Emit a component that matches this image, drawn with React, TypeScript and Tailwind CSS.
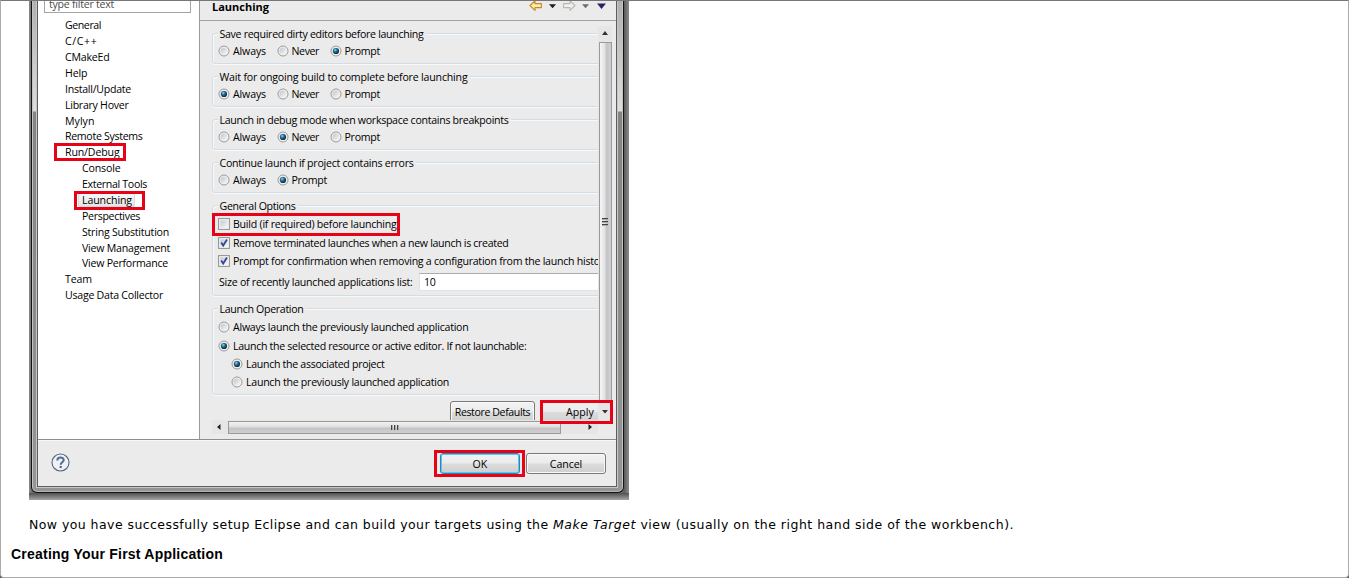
import { useLayoutEffect, useRef, useState, type ReactNode } from "react";

/** A label whose tracking is adjusted so that it spans the given width. */
function Label({ text, w, className = "" }: { text: string; w: number; className?: string }) {
  const ref = useRef<HTMLSpanElement>(null);
  const [spacing, setSpacing] = useState(0);
  useLayoutEffect(() => {
    if (ref.current) {
      const natural = ref.current.getBoundingClientRect().width;
      setSpacing((w - natural) / text.length);
    }
  }, [text, w]);
  return (
    <span ref={ref} className={`inline-block whitespace-pre ${className}`} style={{ letterSpacing: spacing }}>
      {text}
    </span>
  );
}

type TreeItem = { text: string; w: number; child?: boolean; marked?: string; selected?: boolean };

const tree: TreeItem[] = [
  { text: "General", w: 36 },
  { text: "C/C++", w: 32.5 },
  { text: "CMakeEd", w: 44.5 },
  { text: "Help", w: 22.5 },
  { text: "Install/Update", w: 66 },
  { text: "Library Hover", w: 63.5 },
  { text: "Mylyn", w: 29.5 },
  { text: "Remote Systems", w: 77.5 },
  { text: "Run/Debug", w: 54.5, marked: "left-[-11px] top-[-1px] w-[72px] h-[18px]" },
  { text: "Console", w: 38.5, child: true },
  { text: "External Tools", w: 65, child: true },
  { text: "Launching", w: 50, child: true, selected: true, marked: "left-[-8px] top-[-1px] w-[71px] h-[19px]" },
  { text: "Perspectives", w: 58, child: true },
  { text: "String Substitution", w: 87, child: true },
  { text: "View Management", w: 88, child: true },
  { text: "View Performance", w: 86, child: true },
  { text: "Team", w: 27 },
  { text: "Usage Data Collector", w: 98 },
];

function Mark({ className }: { className: string }) {
  return <span className={`pointer-events-none absolute z-10 border-[3px] border-[#e60318] ${className}`} />;
}

function Radio({ on }: { on?: boolean }) {
  return (
    <svg className="h-[12px] w-[12px] shrink-0" viewBox="0 0 12 12">
      <defs>
        <linearGradient id="radioFace" x1="0" y1="0" x2="1" y2="1">
          <stop offset="0" stopColor="#bfc3c9" />
          <stop offset="1" stopColor="#fbfbfb" />
        </linearGradient>
        <radialGradient id="radioDot" cx="0.38" cy="0.35" r="0.65">
          <stop offset="0" stopColor="#8fdcf5" />
          <stop offset="0.45" stopColor="#23698f" />
          <stop offset="1" stopColor="#0b2740" />
        </radialGradient>
      </defs>
      <circle cx="6" cy="6" r="5" fill="#f4f4f4" stroke="#8e8f8f" strokeWidth="0.9" />
      <circle cx="6" cy="6" r="3.6" fill="url(#radioFace)" />
      {on && <circle cx="6" cy="6" r="3.1" fill="url(#radioDot)" />}
    </svg>
  );
}

function Check({ on }: { on?: boolean }) {
  return (
    <svg className="h-[12px] w-[12px] shrink-0" viewBox="0 0 12 12">
      <defs>
        <linearGradient id="checkFace" x1="0" y1="0" x2="1" y2="1">
          <stop offset="0" stopColor="#c3c7cd" />
          <stop offset="1" stopColor="#f8f8f8" />
        </linearGradient>
      </defs>
      <rect x="0.6" y="0.6" width="10.8" height="10.8" fill="#f4f4f4" stroke="#8e8f8f" />
      <rect x="2.4" y="2.4" width="7.2" height="7.2" fill="url(#checkFace)" />
      {on && <path d="M3.2 5.6 L5.2 8.6 L9 2.6" fill="none" stroke="#34479a" strokeWidth="1.8" />}
    </svg>
  );
}

function Option({ text, w, on, box, className = "" }: { text: string; w: number; on?: boolean; box?: boolean; className?: string }) {
  return (
    <div className={`flex shrink-0 items-center gap-[3px] ${className}`}>
      {box ? <Check on={on} /> : <Radio on={on} />}
      <Label text={text} w={w} />
    </div>
  );
}

function Group({ title, w, className, children }: { title: string; w: number; className: string; children: ReactNode }) {
  return (
    <section className={`w-[400px] shrink-0 rounded-[3px] border border-[#d0dde6] pl-[5px] shadow-[inset_1px_1px_0_#f8f9fa,0_1px_0_#f8f9fa] ${className}`}>
      <h3 className="-mt-[8px] flex h-[15px] w-fit items-center bg-[#ebebeb] pl-[1.5px] pr-[2px]">
        <Label text={title} w={w} />
      </h3>
      {children}
    </section>
  );
}

function Choices({ value, items }: { value: string; items: string[] }) {
  return (
    <div className="flex h-[20px] items-center">
      {items.map((item) => (
        <Option
          key={item}
          text={item}
          on={item === value}
          w={item === "Always" ? 33 : item === "Never" ? 27.5 : 35.5}
          className={item === "Always" ? "w-[58.5px]" : "w-[53px]"}
        />
      ))}
    </div>
  );
}

function Triangle({ dir, className }: { dir: "up" | "down" | "left" | "right"; className: string }) {
  const d = { up: "M0 4L3 0L6 4Z", down: "M0 1L6 1L3 4.6Z", left: "M4.5 0L4.5 6L1 3Z", right: "M1.5 0L1.5 6L5 3Z" }[dir];
  return (
    <svg className={`shrink-0 ${className}`} viewBox="0 0 6 6">
      <path d={d} fill="currentColor" />
    </svg>
  );
}

function Arrow({ back }: { back?: boolean }) {
  return (
    <svg className="h-[12px] w-[14px] shrink-0" viewBox="0 0 14 12">
      <path
        d={back ? "M1 5.5L6 1V3.6H12.4V7.6H6V10.4Z" : "M13 5.5L8 1V3.6H1.6V7.6H8V10.4Z"}
        fill={back ? "#fdeeb0" : "#f1f1ec"}
        stroke={back ? "#c88a1c" : "#b9b8b2"}
        strokeWidth="1.1"
        strokeLinejoin="round"
      />
    </svg>
  );
}

const buttonFace = "bg-[linear-gradient(#f3f3f3_0%,#ebebeb_48%,#dcdcdc_52%,#cfcfcf_100%)]";

function Dialog() {
  return (
    <div className="flex h-[499px] w-[600px] flex-col bg-[linear-gradient(90deg,#8a8a8a_0,#6a6a6a_3px,#6a6a6a_594px,#5a5a5a_595px,#8c8c8c_600px)] font-['Open_Sans','Noto_Sans',sans-serif] text-[10.6px] leading-[14px] text-black">
      <div className="ml-[2px] flex h-[492px] w-[593px] flex-col rounded-b-[6px] border border-t-0 border-[#141414] bg-[linear-gradient(#b0b0b0_0px,#dedede_110px,#858585_111px,#8c8c8c_300px,#969696_100%)] px-[5px] pb-[5px] shadow-[inset_1px_0_0_#c4c4c4,inset_-1px_0_0_#c4c4c4,inset_0_-1px_0_#b4b4b4]">
        <div className="flex min-h-0 w-[580px] flex-1 flex-col border border-t-0 border-[#5d5d5d] bg-[#ebebeb] shadow-[0_0_0_1px_#c6c6c6]">
          <div className="flex h-[438px] shrink-0">
            <nav className="w-[162px] shrink-0 border-r border-[#9b9b9b] bg-white">
              <div className="ml-[6px] h-[12px] w-[147px] overflow-hidden border border-t-0 border-[#a5a5a5] pl-[4px] text-[#4d4d4d]">
                <div className="-mt-[4px]">
                  <Label text="type filter text" w={65} />
                </div>
              </div>
              <ul className="mt-[4.4px] pl-[27px]">
                {tree.map((item) => (
                  <li key={item.text} className={`relative flex h-[15.88px] items-center ${item.child ? "ml-[17px]" : ""}`}>
                    {item.selected && (
                      <span className="absolute left-[-4px] top-[1px] h-[14px] w-[57px] rounded-[2px] border border-[#d9d9d9] bg-[linear-gradient(#f8f8f8,#e5e5e5)]" />
                    )}
                    <Label text={item.text} w={item.w} className="relative" />
                    {item.marked && <Mark className={item.marked} />}
                  </li>
                ))}
              </ul>
            </nav>

            <main className="flex min-w-0 flex-1 flex-col">
              <header className="flex h-[20px] shrink-0 items-start border-b border-[#a0a0a0] pl-[12px]">
                <Label text="Launching" w={57} className="-mt-[1px] text-[11px] font-bold" />
                <div className="-mt-[1px] ml-auto flex items-center pr-[10px]">
                  <Arrow back />
                  <Triangle dir="down" className="ml-[6px] h-[7px] w-[7px] text-[#1c1c1c]" />
                  <span className="w-[6px]" />
                  <Arrow />
                  <Triangle dir="down" className="ml-[6px] h-[7px] w-[7px] text-[#6d6d6d]" />
                  <Triangle dir="down" className="ml-[8px] h-[9px] w-[9px] text-[#27236b]" />
                </div>
              </header>

              <div className="flex min-h-0 flex-1 pl-[12px]">
                <div className="flex w-[386px] shrink-0 flex-col">
                  <div className="flex h-[399px] flex-col gap-[12px] overflow-hidden pt-[12px]">
                    <Group title="Save required dirty editors before launching" w={204} className="h-[31px]">
                      <Choices value="Prompt" items={["Always", "Never", "Prompt"]} />
                    </Group>
                    <Group title="Wait for ongoing build to complete before launching" w={248} className="h-[31px]">
                      <Choices value="Always" items={["Always", "Never", "Prompt"]} />
                    </Group>
                    <Group title="Launch in debug mode when workspace contains breakpoints" w={289} className="h-[31px]">
                      <Choices value="Never" items={["Always", "Never", "Prompt"]} />
                    </Group>
                    <Group title="Continue launch if project contains errors" w={194} className="h-[31px]">
                      <Choices value="Prompt" items={["Always", "Prompt"]} />
                    </Group>
                    <Group title="General Options" w={76} className="h-[91px]">
                      <div className="relative mt-px flex h-[20px] items-center">
                        <Option box text="Build (if required) before launching" w={163.5} />
                        <Mark className="left-[-6px] top-[-1px] h-[23px] w-[188px]" />
                      </div>
                      <Option box on text="Remove terminated launches when a new launch is created" w={275.5} className="h-[18px]" />
                      <Option box on text="Prompt for confirmation when removing a configuration from the launch history" w={376} className="h-[18px]" />
                      <div className="mt-[2px] flex h-[20px] items-center">
                        <div className="w-[201px] shrink-0 pl-px">
                          <Label text="Size of recently launched applications list:" w={193.5} />
                        </div>
                        <div className="h-[18px] w-[190px] shrink-0 border border-[#dfe2e6] border-t-[#a9abb0] bg-white pl-[4px]">
                          <Label text="10" w={11.5} className="mt-px" />
                        </div>
                      </div>
                    </Group>
                    <Group title="Launch Operation" w={84} className="h-[87px]">
                      <Option text="Always launch the previously launched application" w={235.5} className="mt-[2px] h-[18px]" />
                      <Option on text="Launch the selected resource or active editor. If not launchable:" w={293.5} className="h-[19px]" />
                      <Option on text="Launch the associated project" w={138.5} className="ml-[13px] h-[18px]" />
                      <Option text="Launch the previously launched application" w={203} className="ml-[13px] h-[18px]" />
                    </Group>
                    <div className="-mt-[6px] flex h-[20px] shrink-0 justify-between pl-[238px]">
                      <div className={`flex h-[22px] w-[85px] items-center justify-center rounded-[3px] border border-[#7a7a7a] shadow-[inset_0_0_0_1px_#f8f8f8] ${buttonFace}`}>
                        <Label text="Restore Defaults" w={75.5} />
                      </div>
                      <div className={`flex h-[22px] w-[55px] items-center pl-[23px] ${buttonFace}`}>
                        <Label text="Apply" w={28} />
                      </div>
                    </div>
                  </div>

                  <div className="flex h-[14px] shrink-0 items-center bg-[#e6e6e6]">
                    <Triangle dir="left" className="ml-[4px] h-[6px] w-[6px] text-[#222]" />
                    <div className="ml-[6px] flex h-[13px] w-[333px] items-center justify-center gap-px border border-[#9a9a9a] bg-[linear-gradient(#f2f2f2_0%,#dfdfdf_45%,#c4c4c8_55%,#cfcfd2_100%)]">
                      <span className="h-[5px] w-[2px] border-l border-[#444] bg-[#aaa]" />
                      <span className="h-[5px] w-[2px] border-l border-[#444] bg-[#aaa]" />
                      <span className="h-[5px] w-[2px] border-l border-[#444] bg-[#aaa]" />
                    </div>
                    <Triangle dir="right" className="ml-[26px] h-[6px] w-[6px] text-[#222]" />
                  </div>
                </div>

                <div className="relative mt-[5px] flex h-[396px] w-[14px] shrink-0 flex-col items-center bg-[#e6e6e6]">
                  <div className="flex h-[16px] items-center">
                    <Triangle dir="up" className="h-[6px] w-[6px] text-[#333]" />
                  </div>
                  <div className="flex h-[359px] w-[13px] flex-col items-center justify-center gap-px border border-[#9a9a9a] bg-[linear-gradient(90deg,#f5f5f5_0%,#e1e1e1_45%,#c4c4c8_58%,#d0d0d4_100%)]">
                    <span className="h-[2px] w-[6px] border-t border-[#444] bg-[#aaa]" />
                    <span className="h-[2px] w-[6px] border-t border-[#444] bg-[#aaa]" />
                    <span className="h-[2px] w-[6px] border-t border-[#444] bg-[#aaa]" />
                  </div>
                  <Triangle dir="down" className="mt-[8px] h-[6px] w-[6px] text-[#333]" />
                  <Mark className="left-[-58px] top-[374px] h-[24px] w-[73px]" />
                </div>
              </div>
            </main>
          </div>

          <footer className="flex flex-1 border-t border-[#8e8e8e] pl-[13px] shadow-[inset_0_1px_0_#f7f7f7]">
            <svg className="mt-[13px] h-[19px] w-[19px]" viewBox="0 0 19 19">
              <circle cx="9.5" cy="9.5" r="8.5" fill="#f0f1f3" stroke="#516683" strokeWidth="1.1" />
              <path d="M6.3 7.4C6.3 3.6 12.7 3.7 12.7 7.1C12.7 9.3 9.7 9.2 9.7 11.8" fill="none" stroke="#516d92" strokeWidth="2" />
              <circle cx="9.7" cy="14.1" r="1.25" fill="#516d92" />
            </svg>
            <div className="relative ml-auto mr-[10px] mt-[13px] flex gap-[6px]">
              <div className={`flex h-[21px] w-[80px] items-center justify-center rounded-[3px] border border-[#3c7fb1] shadow-[inset_0_0_0_1px_#48d0f5] ${buttonFace}`}>
                <Label text="OK" w={15} />
              </div>
              <div className={`flex h-[21px] w-[80px] items-center justify-center rounded-[3px] border border-[#7a7a7a] shadow-[inset_0_0_0_1px_#f8f8f8] ${buttonFace}`}>
                <Label text="Cancel" w={32.5} />
              </div>
              <Mark className="left-[-6px] top-[-3px] h-[27px] w-[91px]" />
            </div>
          </footer>
        </div>
      </div>
      <div className="h-[7px] bg-[linear-gradient(#4f4f4f,#a6a6a6)]" />
    </div>
  );
}

export default function App() {
  return (
    <div className="h-[578px] w-[1349px] overflow-hidden bg-[#555]">
      <div className="flex h-[578px] w-[1349px] flex-col overflow-hidden rounded-b-[4px] border border-[#ababab] border-t-[#777] bg-white">
        <div className="ml-[28px] shrink-0">
          <Dialog />
        </div>
        <p className="ml-[28px] mt-[16px] font-['DejaVu_Sans',Verdana,sans-serif] text-[12.5px] leading-[18px] text-black">
          <Label text="Now you have successfully setup Eclipse and can build your targets using the " w={524} />
          <Label text="Make Target" w={83} className="italic" />
          <Label text=" view (usually on the right hand side of the workbench)." w={378} />
        </p>
        <h2 className="ml-[10px] mt-[11px] font-['Liberation_Sans',Arial,sans-serif] text-[14px] font-bold leading-[18px] text-black">
          <Label text="Creating Your First Application" w={212} />
        </h2>
      </div>
    </div>
  );
}
